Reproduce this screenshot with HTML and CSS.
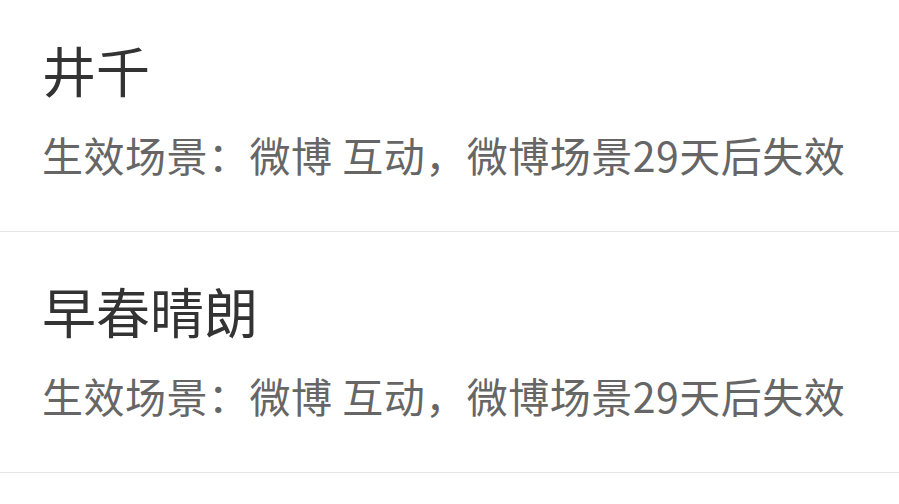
FILE: index.html
```html
<!DOCTYPE html>
<html lang="zh-CN">
<head>
<meta charset="utf-8">
<link rel="stylesheet" href="styles.css">
</head>
<body>
<ul class="list">
  <li class="item">
    <div class="title">井千</div>
    <div class="desc">生效场景：微博 互动，微博场景29天后失效</div>
  </li>
  <li class="item">
    <div class="title">早春晴朗</div>
    <div class="desc">生效场景：微博 互动，微博场景29天后失效</div>
  </li>
</ul>
</body>
</html>
```

FILE: styles.css
```css
html, body {
  margin: 0;
  padding: 0;
  background: #ffffff;
}
body {
  font-family: "Noto Sans CJK SC", "Noto Sans", sans-serif;
  width: 899px;
  height: 504px;
  overflow: hidden;
}
.list {
  list-style: none;
  margin: -9px 0 0 0;
  padding: 0;
}
.item {
  box-sizing: border-box;
  height: 241px;
  padding: 53px 0 0 42px;
  border-bottom: 1px solid #e6e6e6;
}
.title {
  font-size: 54px;
  line-height: 52px;
  color: #333333;
}
.desc {
  margin-top: 38px;
  font-size: 41px;
  line-height: 40px;
  letter-spacing: 0.5px;
  color: #666666;
  white-space: nowrap;
}
```
